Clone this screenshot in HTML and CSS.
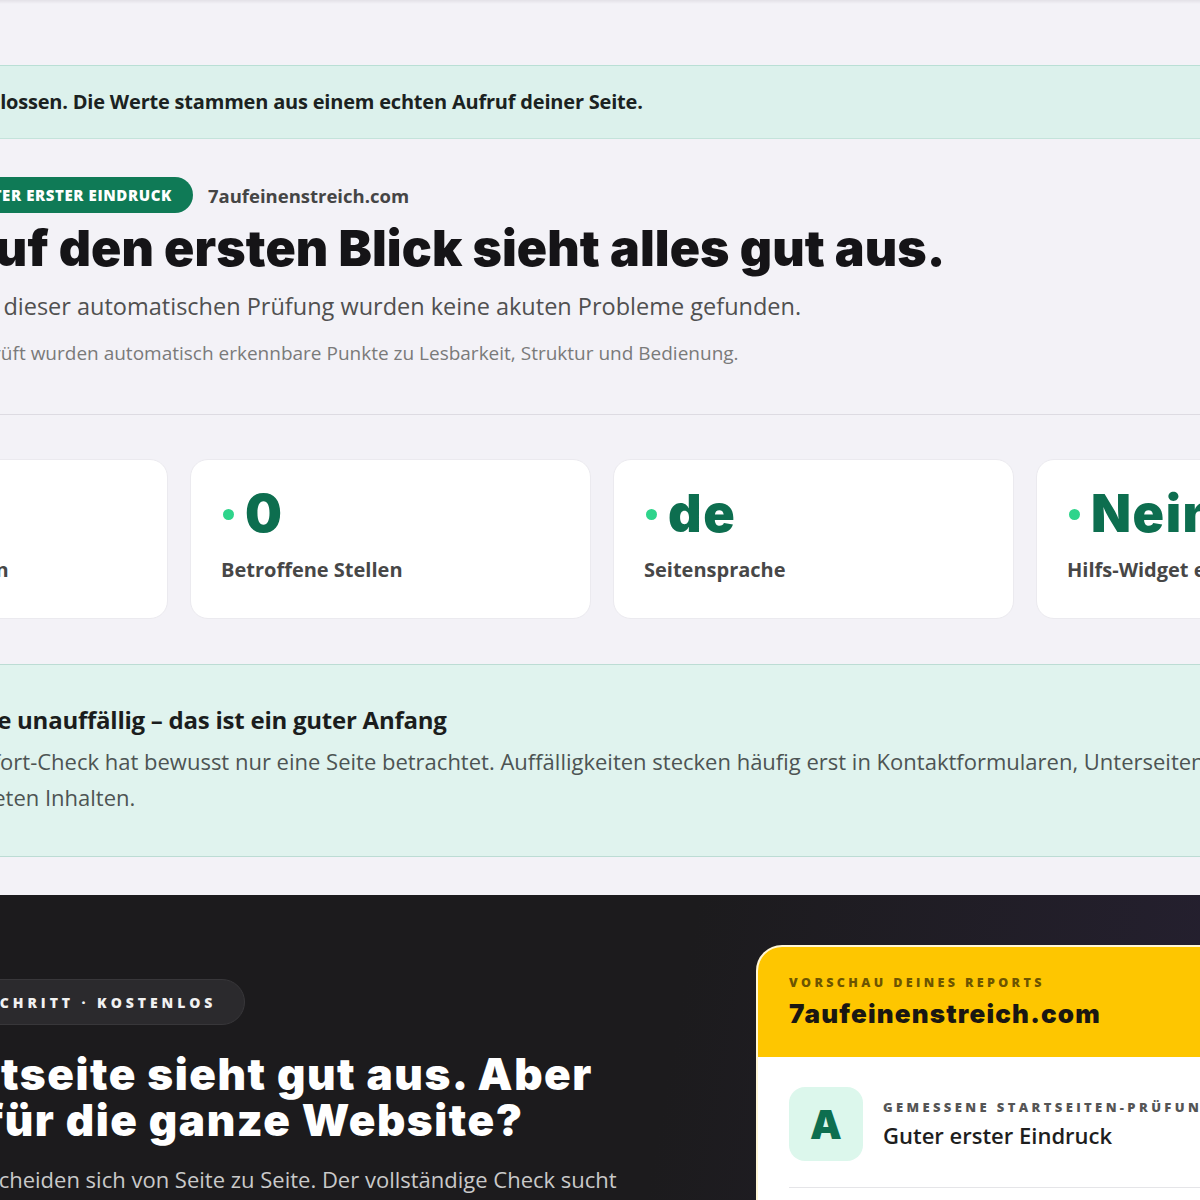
FILE: index.html
```html
<!DOCTYPE html>
<html lang="de">
<head>
    <meta charset="UTF-8">
    <meta name="viewport" content="width=device-width, initial-scale=1.0">
    <title>Sofort-Check – 7aufeinenstreich.com</title>
    <link rel="stylesheet" href="styles.css">
</head>
<body>
    <div class="top-edge"></div>

    <div class="notice">
        <p>Der Kurz-Check ist abgeschlossen. Die Werte stammen aus einem echten Aufruf deiner Seite.</p>
    </div>

    <section class="result-head">
        <div class="result-meta">
            <span class="grade-pill">Guter erster Eindruck</span>
            <span class="domain">7aufeinenstreich.com</span>
        </div>
        <h1>Auf den ersten Blick sieht alles gut aus.</h1>
        <p class="lead">Bei dieser automatischen Prüfung wurden keine akuten Probleme gefunden.</p>
        <p class="note">Geprüft wurden automatisch erkennbare Punkte zu Lesbarkeit, Struktur und Bedienung.</p>
    </section>

    <section class="stats">
        <div class="stat">
            <div class="stat-value">0</div>
            <div class="stat-label">Gefundene Barrieren</div>
        </div>
        <div class="stat">
            <div class="stat-value">0</div>
            <div class="stat-label">Betroffene Stellen</div>
        </div>
        <div class="stat">
            <div class="stat-value">de</div>
            <div class="stat-label">Seitensprache</div>
        </div>
        <div class="stat">
            <div class="stat-value">Nein</div>
            <div class="stat-label">Hilfs-Widget erkannt</div>
        </div>
    </section>

    <section class="hint">
        <div class="hint-inner">
            <h2>Startseite unauffällig – das ist ein guter Anfang</h2>
            <p>Dieser Sofort-Check hat bewusst nur eine Seite betrachtet. Auffälligkeiten stecken häufig erst in Kontaktformularen, Unterseiten oder eingebetteten Inhalten.</p>
        </div>
    </section>

    <section class="next">
        <div class="next-copy">
            <span class="kicker">Dein nächster Schritt · Kostenlos</span>
            <h2>Eure Startseite sieht gut aus. Aber gilt dies für die ganze Website?</h2>
            <p>Die Prüfwerte unterscheiden sich von Seite zu Seite. Der vollständige Check sucht systematisch auf allen Unterseiten.</p>
        </div>

        <div class="preview">
            <div class="preview-head">
                <div class="preview-label">Vorschau deines Reports</div>
                <div class="preview-domain">7aufeinenstreich.com</div>
            </div>
            <div class="preview-body">
                <div class="grade-row">
                    <div class="grade-box">A</div>
                    <div>
                        <div class="grade-label">Gemessene Startseiten-Prüfung</div>
                        <div class="grade-text">Guter erster Eindruck</div>
                    </div>
                </div>
            </div>
        </div>
    </section>
</body>
</html>
```

FILE: styles.css
```css
* {
    box-sizing: border-box;
}

body {
    margin: 0;
    background: #f3f2f7;
    font-family: "Open Sans", "Liberation Sans", sans-serif;
    color: #1d1d1f;
    overflow: hidden;
}

.top-edge {
    height: 4px;
    background: linear-gradient(#e3e1e7, #f3f2f7);
}

/* status banner */
.notice {
    margin-top: 61px;
    background: #dcf1ec;
    border-top: 1px solid #b9dfd5;
    border-bottom: 1px solid #c4e3db;
    padding: 21px 0;
}

.notice p {
    margin: 0 0 0 -264px;
    font-size: 20px;
    font-weight: 700;
    line-height: 30px;
    letter-spacing: -0.01em;
    white-space: nowrap;
    color: #1b2221;
}

/* result header */
.result-head {
    margin-left: -35px;
    padding: 38px 0 49px;
    border-bottom: 1px solid #dddbe2;
}

.result-meta {
    display: flex;
    align-items: center;
    gap: 15px;
    margin-left: -14px;
}

.grade-pill {
    display: inline-flex;
    align-items: center;
    height: 36px;
    padding: 0 21px 0 18px;
    border-radius: 18px;
    background: #0f7a56;
    color: #fff;
    font-size: 15px;
    font-weight: 800;
    letter-spacing: 0.04em;
    text-transform: uppercase;
}

.domain {
    font-size: 18.5px;
    font-weight: 700;
    color: #454545;
}

h1 {
    margin: 8px 0 0 -10px;
    font-family: Inter, sans-serif;
    font-size: 50px;
    font-weight: 900;
    line-height: 55px;
    letter-spacing: 0.002em;
    color: #151417;
}

.lead {
    margin: 14px 0 0 -2px;
    font-size: 23.5px;
    line-height: 32px;
    color: #505050;
}

.note {
    margin: 19px 0 0 -8px;
    font-size: 19px;
    line-height: 24px;
    color: #7a7a7a;
}

/* key figures */
.stats {
    display: flex;
    gap: 22px;
    margin: 44px 0 0 -233px;
}

.stat {
    flex: 0 0 401px;
    height: 160px;
    padding: 25px 30px 0;
    background: #fff;
    border: 1px solid #ebeaef;
    border-radius: 18px;
}

.stat-value {
    display: flex;
    align-items: center;
    gap: 11px;
    font-family: Inter, sans-serif;
    font-size: 52px;
    font-weight: 900;
    line-height: 58px;
    letter-spacing: 0.03em;
    color: #0d6e4f;
}

.stat-value::before {
    content: "";
    width: 11px;
    height: 11px;
    margin-left: 2px;
    border-radius: 50%;
    background: #2ed48b;
}

.stat-label {
    margin-top: 14px;
    font-size: 20px;
    font-weight: 700;
    line-height: 26px;
    color: #474747;
}

/* hint box */
.hint {
    margin-top: 45px;
    padding: 40px 0 41px;
    background: #e0f3ee;
    border-top: 1px solid #bcdcd4;
    border-bottom: 1px solid #bcdcd4;
}

.hint-inner {
    margin-left: -104px;
}

.hint h2 {
    margin: 0;
    font-size: 24px;
    font-weight: 700;
    line-height: 30px;
    letter-spacing: -0.01em;
    color: #1b1d1d;
}

.hint p {
    width: 1440px;
    margin: 8px 0 0;
    font-size: 22px;
    line-height: 36px;
    color: #4d5453;
}

/* dark call to action */
.next {
    display: flex;
    gap: 71px;
    margin-top: 38px;
    padding-top: 50px;
    height: 400px;
    background: linear-gradient(100deg, #1c1b1d 0%, #1c1b1d 55%, #252030 100%);
}

.next-copy {
    flex: 0 0 900px;
    margin-left: -215px;
    padding-top: 34px;
}

.kicker {
    display: inline-flex;
    align-items: center;
    height: 46px;
    padding: 0 28px 0 30px;
    border-radius: 23px;
    background: #2b2a2d;
    border: 1px solid #38373a;
    color: #f1f1f1;
    font-size: 14px;
    font-weight: 800;
    letter-spacing: 0.28em;
    text-transform: uppercase;
}

.next-copy h2 {
    max-width: 850px;
    margin: 26px 0 0;
    font-family: Inter, sans-serif;
    font-size: 44px;
    font-weight: 900;
    line-height: 46px;
    letter-spacing: 0.035em;
    color: #fff;
}

.next-copy p {
    max-width: 900px;
    margin: 20px 0 0;
    font-size: 22px;
    line-height: 32px;
    color: #c9c9c9;
}

/* report preview card */
.preview {
    flex: 0 0 520px;
    background: #fff;
    border: 2px solid #fff6d6;
    border-radius: 26px 26px 0 0;
    overflow: hidden;
}

.preview-head {
    height: 110px;
    padding: 28px 31px 0;
    background: #fec600;
}

.preview-label {
    font-size: 12.5px;
    font-weight: 800;
    line-height: 16px;
    letter-spacing: 0.27em;
    text-transform: uppercase;
    color: #6d5500;
}

.preview-domain {
    margin-top: 7px;
    font-family: Inter, sans-serif;
    font-size: 26px;
    font-weight: 900;
    line-height: 32px;
    letter-spacing: 0.045em;
    color: #1a1712;
}

.preview-body {
    padding: 30px 31px 0;
}

.grade-row {
    display: flex;
    align-items: center;
    gap: 20px;
    padding-bottom: 26px;
    border-bottom: 1px solid #e5e5e8;
}

.grade-box {
    display: flex;
    align-items: center;
    justify-content: center;
    flex: 0 0 74px;
    height: 74px;
    border-radius: 16px;
    background: #dcf7ec;
    font-family: Inter, sans-serif;
    font-size: 40px;
    font-weight: 900;
    color: #0d6e4f;
}

.grade-label {
    font-size: 13px;
    font-weight: 800;
    letter-spacing: 0.26em;
    text-transform: uppercase;
    white-space: nowrap;
    color: #555;
}

.grade-text {
    margin-top: 4px;
    font-size: 22px;
    font-weight: 600;
    color: #1e1e1e;
}
```
